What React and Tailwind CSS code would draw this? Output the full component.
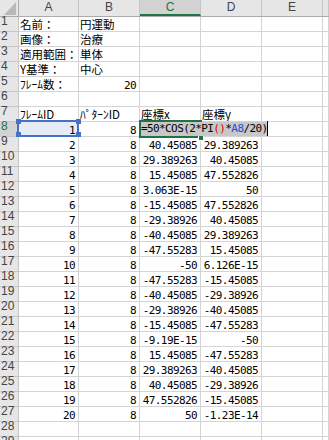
import React from "react";

const cols = [
  { key: "A", w: "w-[60px]" },
  { key: "B", w: "w-[61px]" },
  { key: "C", w: "w-[61px]" },
  { key: "D", w: "w-[61px]" },
  { key: "E", w: "w-[61px]" },
  { key: "F", w: "flex-1" },
];

const data = [
  ["1", "8", "", ""],
  ["2", "8", "40.45085", "29.389263"],
  ["3", "8", "29.389263", "40.45085"],
  ["4", "8", "15.45085", "47.552826"],
  ["5", "8", "3.063E-15", "50"],
  ["6", "8", "-15.45085", "47.552826"],
  ["7", "8", "-29.38926", "40.45085"],
  ["8", "8", "-40.45085", "29.389263"],
  ["9", "8", "-47.55283", "15.45085"],
  ["10", "8", "-50", "6.126E-15"],
  ["11", "8", "-47.55283", "-15.45085"],
  ["12", "8", "-40.45085", "-29.38926"],
  ["13", "8", "-29.38926", "-40.45085"],
  ["14", "8", "-15.45085", "-47.55283"],
  ["15", "8", "-9.19E-15", "-50"],
  ["16", "8", "15.45085", "-47.55283"],
  ["17", "8", "29.389263", "-40.45085"],
  ["18", "8", "40.45085", "-29.38926"],
  ["19", "8", "47.552826", "-15.45085"],
  ["20", "8", "50", "-1.23E-14"],
];

// t = text (left, JP font), n = number (right, mono)
const t = (v) => ({ v, kind: "t" });
const n = (v) => ({ v, kind: "n" });

const sheet = [
  [t("名前："), t("円運動")],
  [t("画像："), t("治療")],
  [t("適用範囲："), t("単体")],
  [t("Y基準："), t("中心")],
  [t("ﾌﾚｰﾑ数："), n("20")],
  [],
  [t("ﾌﾚｰﾑID"), t("ﾊﾟﾀｰﾝID"), t("座標x"), t("座標y")],
  ...data.map((r) => r.map((v) => (v ? n(v) : null))),
  [],
  [],
];

const Cell = ({ cell, w, blue }) => (
  <div
    className={`${w} h-[15px] shrink-0 overflow-hidden border-b border-r border-[#d4d4d4] ${
      blue ? "bg-[#e6ecf7]" : "bg-white"
    }`}
  >
    {cell && cell.kind === "t" && (
      <div className="whitespace-nowrap pl-[1px] font-['Noto_Sans_CJK_JP',sans-serif] text-[11.5px] leading-[15px] text-black">
        {cell.v}
      </div>
    )}
    {cell && cell.kind === "n" && (
      <div className="whitespace-nowrap pr-[3px] pt-[3px] text-right font-['DejaVu_Sans_Mono',monospace] text-[11px] leading-[12px] tracking-[-0.6px] text-black">
        {cell.v}
      </div>
    )}
  </div>
);

export default function App() {
  return (
    <div className="relative h-[440px] w-[329px] overflow-hidden bg-white">
      {/* column headers */}
      <div className="flex h-[17px] border-b border-[#ababab] bg-[#e6e6e6] font-['Liberation_Sans',Arial,sans-serif] text-[12px] leading-[13px]">
        <div className="relative w-[19px] shrink-0 border-r border-[#ababab]">
          <svg className="absolute left-[4px] top-[2px]" width="12" height="13" viewBox="0 0 12 13">
            <polygon points="12,0 12,13 0,13" fill="#b9b9b9" />
          </svg>
        </div>
        {cols.map((c) => (
          <div
            key={c.key}
            className={`${c.w} shrink-0 border-r border-[#c6c6c6] pt-[1px] text-center ${
              c.key === "C"
                ? "border-b-2 border-b-[#217346] bg-[#d2d2d2] text-[#217346]"
                : "text-[#444]"
            }`}
          >
            {c.key !== "F" && c.key}
          </div>
        ))}
      </div>

      {/* rows */}
      {sheet.map((row, i) => {
        const r = i + 1;
        const active = r === 8;
        return (
          <div key={r} className="flex">
            <div
              className={`h-[15px] w-[19px] shrink-0 whitespace-nowrap border-b border-r border-[#c6c6c6] pl-[1px] font-['Liberation_Sans',Arial,sans-serif] text-[12px] leading-[9px] ${
                active
                  ? "border-r-2 border-r-[#217346] bg-[#d2d2d2] text-[#217346]"
                  : "bg-[#e6e6e6] text-[#444]"
              }`}
            >
              {r}
            </div>
            {cols.map((c, j) => (
              <Cell
                key={c.key}
                w={c.w}
                cell={row[j]}
                blue={active && c.key === "A"}
              />
            ))}
          </div>
        );
      })}

      {/* reference highlight on A8 */}
      <div className="absolute left-[17px] top-[120px] h-[17px] w-[62px] border-2 border-[#4472c4]" />
      {[
        "left-[16px] top-[119px]",
        "left-[76px] top-[119px]",
        "left-[16px] top-[132px]",
        "left-[76px] top-[132px]",
      ].map((p) => (
        <div key={p} className={`absolute ${p} h-[5px] w-[5px] bg-[#4472c4]`} />
      ))}

      {/* active cell C8 */}
      <div className="absolute left-[139px] top-[120px] h-[18px] w-[63px] border-2 border-[#217346]" />
      <div className="absolute left-[198px] top-[135px] h-[6px] w-[6px] border border-white bg-[#217346]" />

      {/* in-cell edit text */}
      <div className="absolute left-[141px] top-[122px] flex h-[14px] items-start whitespace-nowrap bg-[#c8c8c8] pt-[1px] font-['DejaVu_Sans_Mono',monospace] text-[11px] leading-[12px] tracking-[-0.6px] text-black">
        <span>=50*COS(2*PI</span>
        <span className="text-[#e00000]">()</span>
        <span>*</span>
        <span className="text-[#1f4fd6]">A8</span>
        <span>/20)</span>
      </div>
      <div className="absolute left-[267px] top-[121px] h-[15px] w-[1px] bg-black" />
    </div>
  );
}
